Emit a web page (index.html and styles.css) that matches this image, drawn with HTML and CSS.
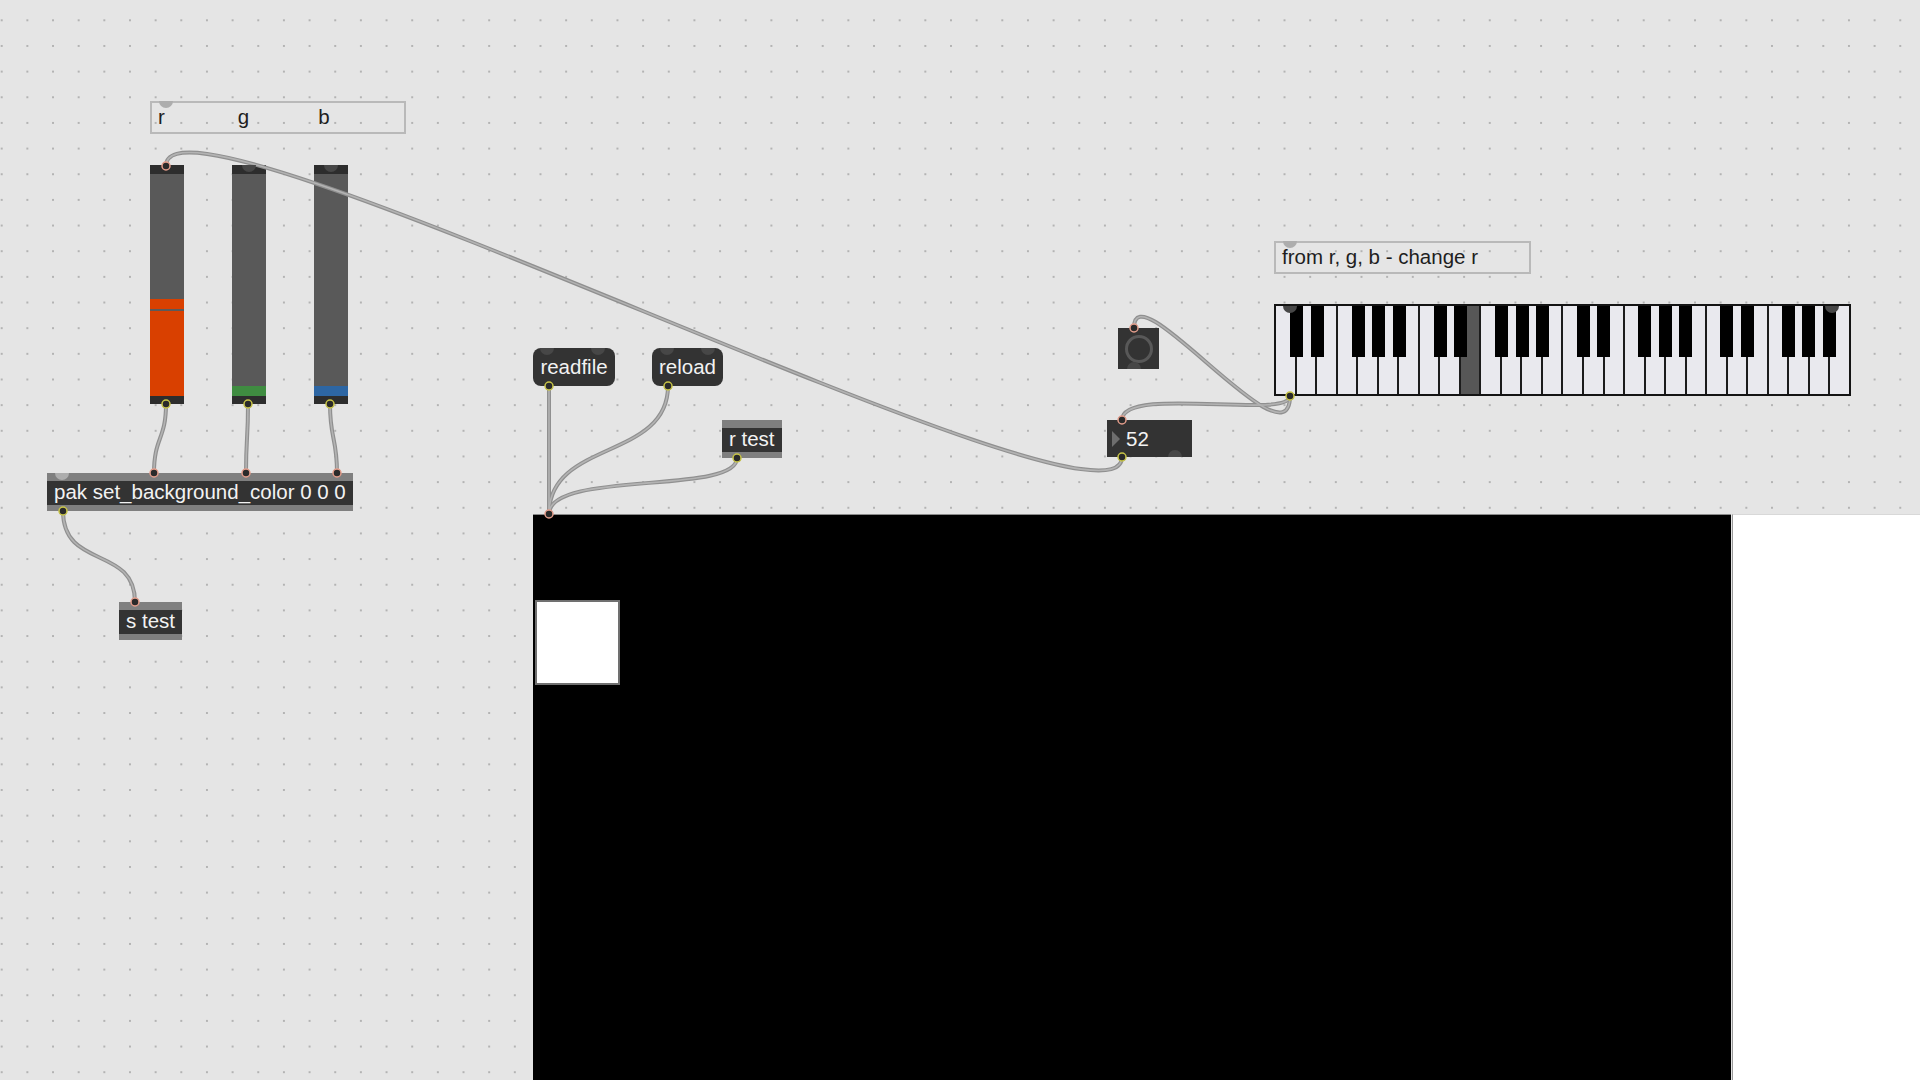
FILE: index.html
```html
<!DOCTYPE html>
<html lang="en">
<head>
    <meta charset="UTF-8">
    <title>Patcher</title>
    <link rel="stylesheet" href="styles.css">
</head>
<body>
    <div class="patcher">
        <!-- comments -->
        <div class="comment rgb-label" style="left:150px;top:101px;width:256px;">
            <span>r</span><span class="lbl-g">g</span><span class="lbl-b">b</span>
        </div>
        <div class="comment" style="left:1274px;top:241px;width:257px;">from r, g, b - change r</div>

        <!-- sliders -->
        <div class="slider" style="left:150px;">
            <div class="slider-track">
                <div class="slider-fill red" style="height:97px;"><div class="knob-line"></div></div>
            </div>
        </div>
        <div class="slider" style="left:232px;">
            <div class="slider-track">
                <div class="slider-fill green" style="height:10px;"></div>
            </div>
        </div>
        <div class="slider" style="left:314px;">
            <div class="slider-track">
                <div class="slider-fill blue" style="height:10px;"></div>
            </div>
        </div>

        <!-- objects -->
        <div class="obj" style="left:47px;top:473px;">pak set_background_color 0 0 0</div>
        <div class="obj" style="left:119px;top:602px;">s test</div>
        <div class="obj" style="left:722px;top:420px;">r test</div>

        <!-- messages -->
        <div class="msg" style="left:533px;top:348px;width:82px;">readfile</div>
        <div class="msg" style="left:652px;top:348px;width:71px;">reload</div>

        <!-- bang + number -->
        <div class="bang" style="left:1118px;top:328px;"><div class="bang-ring"></div></div>
        <div class="numbox" style="left:1107px;top:420px;"><span class="num-arrow"></span><span>52</span></div>

        <!-- keyboard -->
        <div class="kslider" style="left:1274px;top:304px;">
            <div class="white-keys">
                <div class="wk"></div><div class="wk"></div><div class="wk"></div><div class="wk"></div><div class="wk"></div><div class="wk"></div><div class="wk"></div>
                <div class="wk"></div><div class="wk"></div><div class="wk on"></div><div class="wk"></div><div class="wk"></div><div class="wk"></div><div class="wk"></div>
                <div class="wk"></div><div class="wk"></div><div class="wk"></div><div class="wk"></div><div class="wk"></div><div class="wk"></div><div class="wk"></div>
                <div class="wk"></div><div class="wk"></div><div class="wk"></div><div class="wk"></div><div class="wk"></div><div class="wk"></div><div class="wk"></div>
            </div>
            <div class="bk" style="--k:1"></div><div class="bk" style="--k:2"></div><div class="bk" style="--k:4"></div><div class="bk" style="--k:5"></div><div class="bk" style="--k:6"></div>
            <div class="bk" style="--k:8"></div><div class="bk" style="--k:9"></div><div class="bk" style="--k:11"></div><div class="bk" style="--k:12"></div><div class="bk" style="--k:13"></div>
            <div class="bk" style="--k:15"></div><div class="bk" style="--k:16"></div><div class="bk" style="--k:18"></div><div class="bk" style="--k:19"></div><div class="bk" style="--k:20"></div>
            <div class="bk" style="--k:22"></div><div class="bk" style="--k:23"></div><div class="bk" style="--k:25"></div><div class="bk" style="--k:26"></div><div class="bk" style="--k:27"></div>
        </div>

        <!-- render views -->
        <div class="screen" style="left:533px;top:514px;width:1198px;">
            <div class="square"></div>
        </div>
        <div class="screen white" style="left:1732px;top:514px;width:188px;"></div>

        <!-- cables and ports -->
        <svg class="cables" width="1920" height="1080" viewBox="0 0 1920 1080">
            <g class="cable">
                <path d="M1122 457 C1122 557 166 66 166 166"/>
                <path d="M166 404 C166 440 154 437 154 473"/>
                <path d="M248 404 C248 440 246 437 246 473"/>
                <path d="M330 404 C330 440 337 437 337 473"/>
                <path d="M63 511 C63 570 135 545 135 602"/>
                <path d="M549 386 L549 514"/>
                <path d="M668 386 C668 460 549 440 549 514"/>
                <path d="M737 458 C737 495 549 470 549 514"/>
                <path d="M1290 396 C1290 470 1134 268 1134 328"/>
                <path d="M1290 396 C1290 420 1122 385 1122 420"/>
            </g>
            <g class="cable-hi">
                <path d="M1122 457 C1122 557 166 66 166 166"/>
                <path d="M166 404 C166 440 154 437 154 473"/>
                <path d="M248 404 C248 440 246 437 246 473"/>
                <path d="M330 404 C330 440 337 437 337 473"/>
                <path d="M63 511 C63 570 135 545 135 602"/>
                <path d="M549 386 L549 514"/>
                <path d="M668 386 C668 460 549 440 549 514"/>
                <path d="M737 458 C737 495 549 470 549 514"/>
                <path d="M1290 396 C1290 470 1134 268 1134 328"/>
                <path d="M1290 396 C1290 420 1122 385 1122 420"/>
            </g>
            <!-- unconnected ports -->
            <g class="bump-dark">
                <path d="M242 165 A7 7 0 0 0 256 165 Z"/>
                <path d="M324 165 A7 7 0 0 0 338 165 Z"/>
                <path d="M540 348 A7 7 0 0 0 554 348 Z"/>
                <path d="M591 348 A7 7 0 0 0 605 348 Z"/>
                <path d="M660 348 A7 7 0 0 0 674 348 Z"/>
                <path d="M701 348 A7 7 0 0 0 715 348 Z"/>
                <path d="M1127 369 A7 7 0 0 1 1141 369 Z"/>
                <path d="M1168 457 A7 7 0 0 1 1182 457 Z"/>
                <path d="M1283 306 A7 7 0 0 0 1297 306 Z"/>
                <path d="M1825 306 A7 7 0 0 0 1839 306 Z"/>
            </g>
            <g class="bump-light">
                <path d="M55 473 A7 7 0 0 0 69 473 Z"/>
                <path d="M159 101 A7 7 0 0 0 173 101 Z"/>
                <path d="M1283 241 A7 7 0 0 0 1297 241 Z"/>
            </g>
            <!-- connected inlets -->
            <g class="port-in">
                <circle cx="166" cy="166" r="4"/>
                <circle cx="154" cy="473" r="4"/>
                <circle cx="246" cy="473" r="4"/>
                <circle cx="337" cy="473" r="4"/>
                <circle cx="135" cy="602" r="4"/>
                <circle cx="549" cy="514" r="4"/>
                <circle cx="1134" cy="328" r="4"/>
                <circle cx="1122" cy="420" r="4"/>
            </g>
            <!-- connected outlets -->
            <g class="port-out">
                <circle cx="166" cy="404" r="4"/>
                <circle cx="248" cy="404" r="4"/>
                <circle cx="330" cy="404" r="4"/>
                <circle cx="63" cy="511" r="4"/>
                <circle cx="549" cy="386" r="4"/>
                <circle cx="668" cy="386" r="4"/>
                <circle cx="737" cy="458" r="4"/>
                <circle cx="1122" cy="457" r="4"/>
                <circle cx="1290" cy="396" r="4"/>
            </g>
        </svg>
    </div>
</body>
</html>
```

FILE: styles.css
```css
body {
    margin: 0;
    background: #e5e5e5;
    font-family: "Liberation Sans", Arial, sans-serif;
}
.patcher {
    position: relative;
    width: 1920px;
    height: 1080px;
    overflow: hidden;
    background-color: #e5e5e5;
    background-image: radial-gradient(circle, #b3b3b3 0.9px, transparent 1.4px);
    background-size: 25.667px 25.667px;
    background-position: -11.13px 7.47px;
}
.comment {
    position: absolute;
    box-sizing: border-box;
    height: 33px;
    border: 2px solid #b9b9b9;
    padding: 0 6px;
    font-size: 20.5px;
    line-height: 28px;
    color: #1e1e1e;
    white-space: nowrap;
}
.rgb-label .lbl-g {
    margin-left: 73px;
}
.rgb-label .lbl-b {
    margin-left: 69px;
}
.slider {
    position: absolute;
    top: 165px;
    width: 34px;
    height: 239px;
    box-sizing: border-box;
    background: #2d2d2d;
    padding: 9px 0 8px;
}
.slider-track {
    height: 100%;
    background: #595959;
    display: flex;
    flex-direction: column;
    justify-content: flex-end;
}
.slider-fill {
    position: relative;
}
.slider-fill.red {
    background: #d94000;
}
.slider-fill.green {
    background: #3f8c41;
}
.slider-fill.blue {
    background: #2d66a3;
}
.knob-line {
    position: absolute;
    left: 0;
    right: 0;
    top: 10px;
    height: 2px;
    background: #5a5a5a;
}
.obj {
    position: absolute;
    height: 22px;
    padding: 0 7px 2px;
    background: #333;
    border-top: 8px solid #7f7f7f;
    border-bottom: 6px solid #7f7f7f;
    color: #f2f2f2;
    font-size: 20.5px;
    line-height: 22px;
    white-space: nowrap;
}
.msg {
    position: absolute;
    box-sizing: border-box;
    height: 38px;
    background: #333;
    border-radius: 8px;
    color: #f2f2f2;
    font-size: 20.5px;
    line-height: 37px;
    text-align: center;
    white-space: nowrap;
}
.bang {
    position: absolute;
    width: 41px;
    height: 41px;
    background: #333;
    display: flex;
    align-items: center;
    justify-content: center;
}
.bang-ring {
    width: 22px;
    height: 22px;
    border: 3px solid #585858;
    border-radius: 50%;
}
.numbox {
    position: absolute;
    box-sizing: border-box;
    width: 85px;
    height: 37px;
    background: #333;
    display: flex;
    align-items: center;
    gap: 6px;
    padding-left: 5px;
    color: #f2f2f2;
    font-size: 20.5px;
}
.num-arrow {
    width: 0;
    height: 0;
    border-top: 8px solid transparent;
    border-bottom: 8px solid transparent;
    border-left: 8px solid #6e6e6e;
}
.kslider {
    position: absolute;
    box-sizing: border-box;
    width: 577px;
    height: 92px;
    border: 2px solid #141414;
    background: #e9e9ee;
}
.white-keys {
    display: flex;
    height: 100%;
}
.wk {
    flex: 1;
    border-right: 2px solid #1c1c1c;
    background: #e9e9ee;
}
.wk:last-child {
    border-right: none;
}
.wk.on {
    background: #575757;
}
.bk {
    position: absolute;
    top: 0;
    width: 13px;
    height: 51px;
    background: #000;
    left: calc(var(--k) * 100% / 28 - 6px);
}
.screen {
    position: absolute;
    height: 566px;
    background: #000;
    border-top: 1px solid #8a8a8a;
    box-sizing: border-box;
}
.screen.white {
    background: #fff;
    border-left: 1px solid #9a9a9a;
    border-top-color: #d8d8d8;
}
.square {
    position: absolute;
    left: 2px;
    top: 85px;
    width: 81px;
    height: 81px;
    background: #fff;
    border: 2px solid #707070;
}
.cables {
    position: absolute;
    left: 0;
    top: 0;
    pointer-events: none;
}
.cable path {
    fill: none;
    stroke: #909090;
    stroke-width: 4;
}
.cable-hi path {
    fill: none;
    stroke: #b3b3b3;
    stroke-width: 1.6;
}
.bump-dark path {
    fill: #474747;
}
.bump-light path {
    fill: #adadad;
}
.port-in circle {
    fill: #2a2a2a;
    stroke: #e59e8c;
    stroke-width: 1.5;
}
.port-out circle {
    fill: #2a2a2a;
    stroke: #c9c547;
    stroke-width: 1.5;
}
```
